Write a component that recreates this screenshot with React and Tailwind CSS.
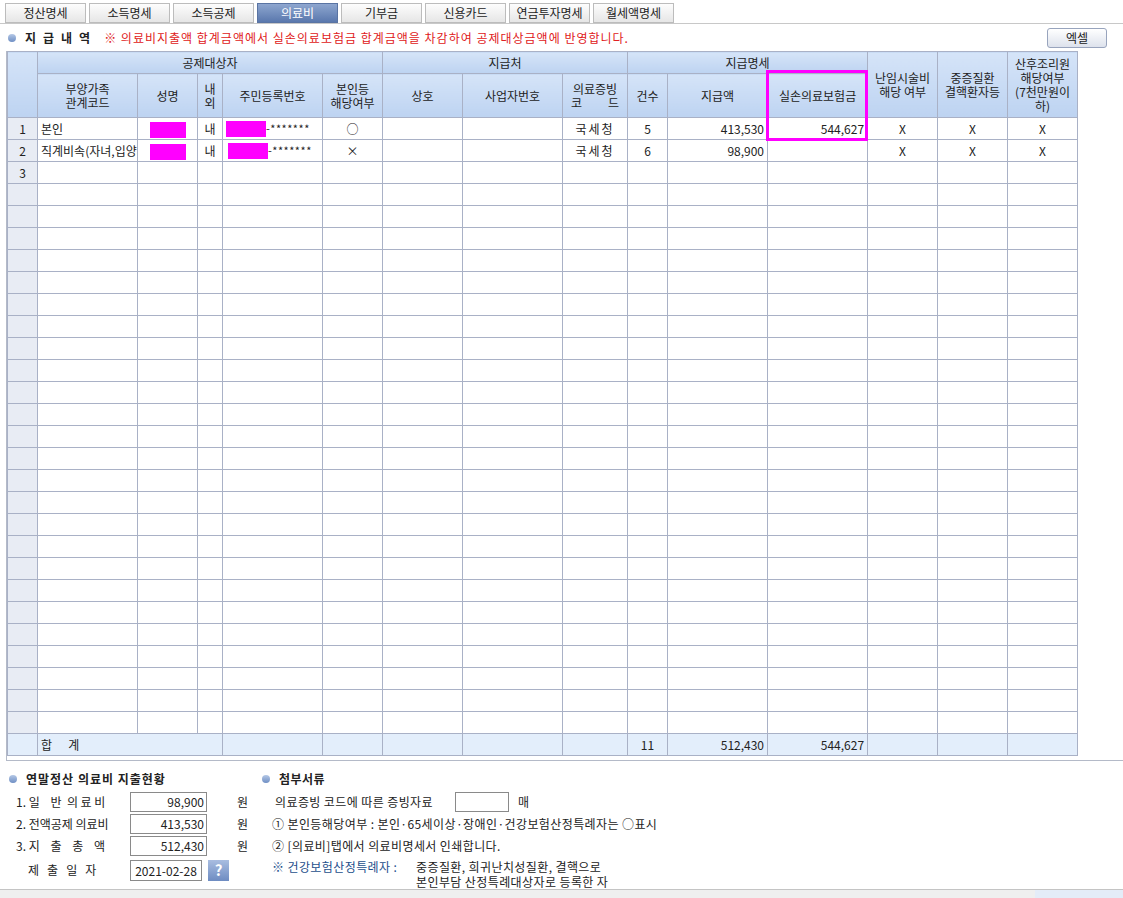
import React from "react";

const tabs = ["정산명세", "소득명세", "소득공제", "의료비", "기부금", "신용카드", "연금투자명세", "월세액명세"];

const cols = [30, 100, 60, 25, 100, 60, 80, 100, 65, 40, 100, 100, 70, 70, 70];

const rows = [
  {
    no: "1",
    rel: "본인",
    name: true,
    io: "내",
    jumin: true,
    self: "○",
    code: "국세청",
    cnt: "5",
    amt: "413,530",
    ins: "544,627",
    x: true,
  },
  {
    no: "2",
    rel: "직계비속(자녀,입양자)",
    name: true,
    io: "내",
    jumin: true,
    self: "×",
    code: "국세청",
    cnt: "6",
    amt: "98,900",
    ins: "",
    x: true,
  },
  { no: "3" },
];

// 나머지 빈 행
while (rows.length < 28) rows.push({});

const td = "border border-[#a9b1c6] h-[22px] p-0 px-[3px] whitespace-nowrap overflow-hidden";
const th =
  "border border-[#a9b1c6] p-0 font-normal text-[#222] bg-gradient-to-b from-[#d5e4f8] to-[#bdd3f1] leading-[14px]";

function Bullet() {
  return (
    <span className="inline-block w-[8px] h-[8px] rounded-full bg-gradient-to-b from-[#b5c8e6] to-[#6f8fc4] mr-[9px]" />
  );
}

function Field({ value, w = "w-[77px]" }) {
  return (
    <div
      className={`${w} h-[20px] border border-[#8a8a8a] bg-white text-right pr-[2px] leading-[18px]`}
    >
      {value}
    </div>
  );
}

export default function App() {
  return (
    <div
      className="relative w-[1123px] h-[898px] overflow-hidden bg-white text-[12px] text-[#222]"
      style={{ fontFamily: '"Noto Sans CJK KR", "Noto Sans", sans-serif' }}
    >
      {/* Tabs */}
      <div className="h-[24px] pt-[3px] pl-[5px] flex gap-[3px] border-b border-[#c8c8c8]">
        {tabs.map((t) => (
          <div
            key={t}
            className={
              t === "의료비"
                ? "w-[81px] h-[20px] flex items-center justify-center border border-[#5a74a3] bg-gradient-to-b from-[#8ea6cf] to-[#5a78ad] text-white"
                : "w-[81px] h-[20px] flex items-center justify-center border border-[#bcbcbc] bg-gradient-to-b from-[#fdfdfd] to-[#e6e6e6]"
            }
          >
            {t}
          </div>
        ))}
      </div>

      {/* Title */}
      <div className="h-[27px] flex items-center pl-[8px] pr-[16px]">
        <Bullet />
        <span className="font-bold tracking-[7px] mr-[7px]">지급내역</span>
        <span className="text-[#e02020] tracking-[1px]">
          ※ 의료비지출액 합계금액에서 실손의료보험금 합계금액을 차감하여 공제대상금액에 반영합니다.
        </span>
        <button className="ml-auto w-[60px] h-[20px] rounded-[3px] border border-[#98a4bd] bg-gradient-to-b from-[#ffffff] to-[#dde2ec] text-[12px]">
          엑셀
        </button>
      </div>

      {/* Grid */}
      <div className="ml-[6px] h-[710px] border-b border-l border-[#b4bac8]">
        <table className="border-collapse table-fixed" style={{ width: 1070 }}>
          <colgroup>
            {cols.map((w, i) => (
              <col key={i} style={{ width: w }} />
            ))}
          </colgroup>
          <thead>
            <tr className="h-[22px]">
              <th rowSpan={2} className={th}></th>
              <th colSpan={5} className={th}>
                공제대상자
              </th>
              <th colSpan={3} className={th}>
                지급처
              </th>
              <th colSpan={3} className={th}>
                지급명세
              </th>
              <th rowSpan={2} className={th}>
                난임시술비
                <br />
                해당 여부
              </th>
              <th rowSpan={2} className={th}>
                중증질환
                <br />
                결핵환자등
              </th>
              <th rowSpan={2} className={th}>
                산후조리원
                <br />
                해당여부
                <br />
                (7천만원이
                <br />
                하)
              </th>
            </tr>
            <tr className="h-[44px]">
              <th className={th}>
                부양가족
                <br />
                관계코드
              </th>
              <th className={th}>성명</th>
              <th className={th}>
                내
                <br />외
              </th>
              <th className={th}>주민등록번호</th>
              <th className={th}>
                본인등
                <br />
                해당여부
              </th>
              <th className={th}>상호</th>
              <th className={th}>사업자번호</th>
              <th className={th}>
                의료증빙
                <br />
                <span className="flex justify-between px-[8px]">
                  <span>코</span>
                  <span>드</span>
                </span>
              </th>
              <th className={th}>건수</th>
              <th className={th}>지급액</th>
              <th className={th}>실손의료보험금</th>
            </tr>
          </thead>
          <tbody>
            {rows.map((r, i) => (
              <tr key={i}>
                <td className={`${td} bg-[#e8ecf4] text-center`}>{r.no}</td>
                <td className={td}>{r.rel}</td>
                <td className={`${td} text-center`}>
                  {r.name && <span className="inline-block align-middle w-[36px] h-[16px] bg-[#ff00ff]" />}
                </td>
                <td className={`${td} text-center`}>{r.io}</td>
                <td className={td}>
                  {r.jumin && (
                    <span className="flex items-center">
                      <span className={`inline-block w-[40px] h-[16px] bg-[#ff00ff] ${i === 1 ? "ml-[2px]" : ""}`} />
                      <span className="text-[11px] tracking-[0.5px]">-*******</span>
                    </span>
                  )}
                </td>
                <td className={`${td} text-center`}>{r.self}</td>
                <td className={td}></td>
                <td className={td}></td>
                <td className={`${td} text-center tracking-[2px]`}>{r.code}</td>
                <td className={`${td} text-center`}>{r.cnt}</td>
                <td className={`${td} text-right`}>{r.amt}</td>
                <td className={`${td} text-right`}>{r.ins}</td>
                <td className={`${td} text-center`}>{r.x && "X"}</td>
                <td className={`${td} text-center`}>{r.x && "X"}</td>
                <td className={`${td} text-center`}>{r.x && "X"}</td>
              </tr>
            ))}
            <tr className="bg-[#e3eefb]">
              <td className={td}></td>
              <td colSpan={3} className={`${td} whitespace-pre`}>
                {"합      계"}
              </td>
              <td className={td}></td>
              <td className={td}></td>
              <td className={td}></td>
              <td className={td}></td>
              <td className={td}></td>
              <td className={`${td} text-center`}>11</td>
              <td className={`${td} text-right`}>512,430</td>
              <td className={`${td} text-right`}>544,627</td>
              <td className={td}></td>
              <td className={td}></td>
              <td className={td}></td>
            </tr>
          </tbody>
        </table>
      </div>

      {/* Bottom */}
      <div className="h-[128px] flex pt-[6px]">
        <div className="w-[256px] pl-[9px]">
          <div className="h-[24px] flex items-center">
            <Bullet />
            <span className="font-bold tracking-[1px]">연말정산 의료비 지출현황</span>
          </div>
          <div className="h-[22px] flex items-center">
            <span className="w-[121px] pl-[7px] whitespace-pre">{"1. 일    반  의 료 비"}</span>
            <Field value="98,900" />
            <span className="ml-[30px]">원</span>
          </div>
          <div className="h-[22px] flex items-center">
            <span className="w-[121px] pl-[7px]">2. 전액공제 의료비</span>
            <Field value="413,530" />
            <span className="ml-[30px]">원</span>
          </div>
          <div className="h-[22px] flex items-center">
            <span className="w-[121px] pl-[7px] whitespace-pre">{"3. 지    출    총    액"}</span>
            <Field value="512,430" />
            <span className="ml-[30px]">원</span>
          </div>
          <div className="h-[26px] flex items-center">
            <span className="w-[121px] pl-[19px] whitespace-pre">{"제   출   일   자"}</span>
            <div className="w-[72px] h-[21px] border border-[#8a8a8a] bg-white text-center leading-[19px]">
              2021-02-28
            </div>
            <span className="ml-[6px] w-[21px] h-[21px] flex items-center justify-center bg-gradient-to-b from-[#a9bde0] to-[#6e8cc2] text-white font-bold text-[15px]">
              ?
            </span>
          </div>
        </div>
        <div className="pl-[6px] tracking-[0.4px]">
          <div className="h-[24px] flex items-center">
            <Bullet />
            <span className="font-bold tracking-[0.5px]">첨부서류</span>
          </div>
          <div className="h-[22px] flex items-center pl-[13px]">
            <span className="w-[180px]">의료증빙 코드에 따른 증빙자료</span>
            <Field value="" w="w-[54px]" />
            <span className="ml-[9px]">매</span>
          </div>
          <div className="h-[22px] flex items-center pl-[10px]">
            ① 본인등해당여부 : 본인·65세이상·장애인·건강보험산정특례자는 ○표시
          </div>
          <div className="h-[22px] flex items-center pl-[10px]">② [의료비]탭에서 의료비명세서 인쇄합니다.</div>
          <div className="flex pl-[10px] pt-[2px] leading-[15px]">
            <span className="w-[144px] text-[#1d4f8c]">※ 건강보험산정특례자 :</span>
            <span>
              중증질환, 희귀난치성질환, 결핵으로
              <br />
              본인부담 산정특례대상자로 등록한 자
            </span>
          </div>
        </div>
      </div>

      {/* Status strip */}
      <div className="h-[9px] border-t border-[#c4c4c4] flex">
        <div className="flex-1 bg-[#efefef]" />
        <div className="w-[88px] bg-[#e4ecf8]" />
      </div>

      {/* Highlight box */}
      <div className="absolute left-[766px] top-[70px] w-[102px] h-[71px] border-[3px] border-[#ff00ff] pointer-events-none" />
    </div>
  );
}
